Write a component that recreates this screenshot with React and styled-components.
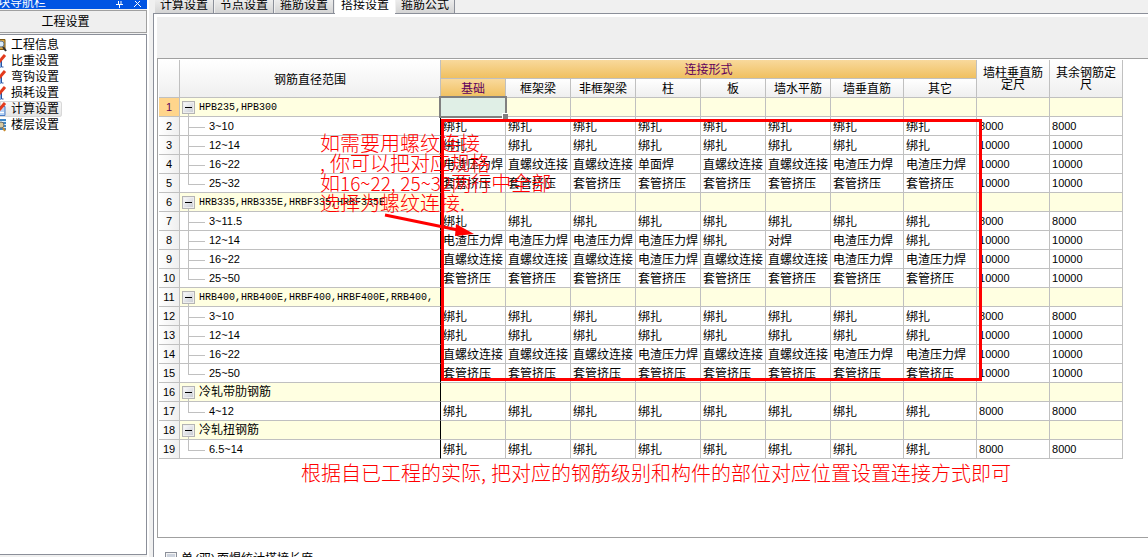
import React from "react";
import styled, { createGlobalStyle, css } from "styled-components";

const line = "#c0c0c0";
const edge = "#8b8f99";

const Global = createGlobalStyle`
  * { box-sizing: border-box; }
  body {
    margin: 0;
    background: #f0f0f0;
    color: #000;
    font: 12px/18px "Liberation Sans", "Noto Sans CJK SC", sans-serif;
  }
  button { font: inherit; color: inherit; padding: 0; margin: 0; }
`;

const Page = styled.div`
  display: flex;
  height: 100vh;
  overflow: hidden;
`;

/* ---- navigation pane ---- */
const Sidebar = styled.aside`
  flex: none;
  width: 149px;
  display: flex;
  flex-direction: column;
  padding-bottom: 2px;
  border-right: 2px solid #fff;
`;

const PaneTitle = styled.header`
  flex: none;
  height: 9px;
  overflow: hidden;
  display: flex;
  align-items: flex-end;
  background: #0054e3;
  color: #fff;
`;

const PaneName = styled.span`
  flex: 1;
  margin-left: -2px;
  margin-bottom: -3px;
`;

const PaneButton = styled.button`
  width: 18px;
  height: 8px;
  border: 0;
  background: none;
  display: flex;
  justify-content: center;
`;

const SectionButton = styled.button`
  flex: none;
  height: 23px;
  margin: 1px 0;
  padding-right: 15px;
  border: 1px solid #a0a0a0;
  border-width: 1px 1px 1px 0;
  background: #efefef;
`;

const NavList = styled.ul`
  flex: 1;
  margin: 0;
  padding: 2px 0 0;
  list-style: none;
  background: #fff;
  border: 1px solid ${edge};
  border-left: 0;
`;

const NavItem = styled.li`
  display: flex;
  height: 16px;
`;

const NavLink = styled.a`
  display: flex;
  align-items: center;
  gap: 3px;
  padding-right: 3px;
  line-height: 16px;
  color: #000;
  text-decoration: none;
  border-radius: 0 3px 3px 0;
  ${(p) => p.$active && css`
    background: linear-gradient(#fafafa, #e4e4e4);
    box-shadow: inset 0 0 0 1px #d8d8d8;
  `}
`;

/* ---- main area ---- */
const Main = styled.main`
  flex: 1;
  min-width: 0;
  margin-left: 4px;
  display: flex;
  flex-direction: column;
`;

const Tabs = styled.nav`
  flex: none;
  height: 14px;
  display: flex;
  align-items: flex-end;
  gap: 1px;
  padding-left: 2px;
  overflow: hidden;
  box-shadow: inset 0 -1px ${edge};
`;

const Tab = styled.button`
  flex: none;
  height: 18px;
  padding: 0 ${(p) => (p.$active ? "6px" : "5px")};
  line-height: ${(p) => (p.$active ? "16px" : "18px")};
  border: solid ${edge};
  border-width: ${(p) => (p.$active ? "0" : "0 1px 1px 0")};
  background: ${(p) => (p.$active ? "#fff" : "linear-gradient(#f4f4f4, #d4d4d4)")};
`;

const Sheet = styled.section`
  flex: 1;
  min-height: 0;
  display: flex;
  flex-direction: column;
  padding: 3px 0 0 3px;
  background: #fff;
  border-left: 1px solid ${edge};
`;

const Toolbar = styled.div`
  flex: none;
  height: 41px;
  background: #efefef;
`;

const GridBox = styled.div`
  flex: 1;
  min-height: 0;
  position: relative;
  padding: 1px;
  border: 1px solid #a0a0a0;
  border-right: 0;
`;

const Footer = styled.footer`
  flex: none;
  height: 19px;
  overflow: hidden;
  padding: 13px 0 0 8px;
`;

const Option = styled.label`
  display: flex;
  align-items: flex-start;
  gap: 4px;
  line-height: 16px;
`;

const Check = styled.input`
  appearance: none;
  width: 12px;
  height: 12px;
  margin: 1px 0 0;
  border: 1px solid ${edge};
  background: #ccd2dc;
  box-shadow: inset 0 0 0 1px #f4f4f4;
`;

/* half an ideograph wide, as in a fixed-pitch CJK face */
const Half = styled.span`
  display: inline-block;
  width: 0.5em;
  text-align: ${(p) => (p.$open ? "right" : "left")};
`;

/* ---- table ---- */
const Table = styled.table`
  width: 964px;
  table-layout: fixed;
  border-collapse: separate;
  border-spacing: 0;
`;

const Head = styled.th`
  height: 19px;
  padding: ${(p) => (p.$wrap ? "0 4px" : "2px 0 0")};
  font-weight: normal;
  line-height: ${(p) => (p.$wrap ? "12px" : "16px")};
  border: solid ${line};
  border-width: 0 1px 1px 0;
  color: ${(p) => (p.$hot ? "#60005c" : "#000")};
  background: ${(p) => (p.$hot ? "linear-gradient(#f9d99c, #f0c060)" : "linear-gradient(#fff, #efefef)")};
`;

const RowHead = styled(Head)`
  padding: 0;
  line-height: 18px;
  font-size: 11px;
  background: ${(p) => (p.$hot ? "#ffd58c" : "linear-gradient(90deg, #fff, #efefef)")};
`;

const Cell = styled.td`
  position: relative;
  height: 19px;
  padding: 2px 0 0 2px;
  line-height: 16px;
  white-space: nowrap;
  border: solid ${line};
  border-width: 0 1px 1px 0;
  background: ${(p) => (p.$group ? "#ffffe1" : "#fff")};
`;

const NumberCell = styled(Cell)`
  padding-top: 0;
  line-height: 18px;
  font-size: 11px;
`;

const TreeCell = styled(Cell)`
  padding-top: 0;
  border-right-color: #000;
`;

const TreeRow = styled.div`
  display: flex;
  height: 18px;
`;

const Expander = styled.span`
  display: flex;
  flex-direction: column;
  align-items: center;
  width: 13px;
  margin-right: 4px;
  padding-top: 3px;
  &::after {
    content: "";
    width: 1px;
    flex: 1;
    background: ${line};
  }
`;

const ExpandButton = styled.button`
  width: 13px;
  height: 13px;
  display: flex;
  align-items: center;
  justify-content: center;
  border: 1px solid #b4b4b4;
  background: linear-gradient(135deg, #fff, #c4c8d0);
  box-shadow: inset 0 0 0 1px #eee;
  &::after {
    content: "";
    width: 7px;
    height: 1px;
    background: #000;
  }
`;

const Branch = styled.span`
  width: 17px;
  height: 19px;
  margin: 0 4px 0 6px;
  &::before, &::after {
    content: "";
    display: block;
    border-left: 1px solid ${line};
  }
  &::before {
    height: 10px;
    border-bottom: 1px solid ${line};
  }
  &::after {
    height: 9px;
    border-left-width: ${(p) => (p.$last ? "0" : "1px")};
  }
`;

const Grade = styled.span`
  padding-top: 2px;
  font-family: "Liberation Mono", "Noto Sans CJK SC", monospace;
  font-size: ${(p) => (p.$cjk ? "12px" : "10px")};
`;

const Range = styled.span`
  padding-top: 1px;
  font-size: 11px;
`;

const Cursor = styled.span`
  position: absolute;
  z-index: 1;
  inset: -2px;
  border: 2px solid #808080;
  background: #e0efe6;
  &::after {
    content: "";
    position: absolute;
    right: -3px;
    bottom: -3px;
    width: 5px;
    height: 5px;
    background: #808080;
    border: solid #fff;
    border-width: 1px 0 0 1px;
  }
`;

/* ---- red markup over the grid ---- */
const Frame = styled.div`
  position: absolute;
  z-index: 2;
  left: 283px;
  top: 60px;
  width: 541px;
  height: 262px;
  border: 3px solid #f00;
`;

const Note = styled.p`
  position: absolute;
  z-index: 3;
  left: ${(p) => p.$x}px;
  top: ${(p) => p.$y}px;
  margin: 0;
  color: #f00;
  font-family: "Noto Sans CJK SC", sans-serif;
  font-size: 20px;
  font-weight: 300;
  line-height: 20px;
  white-space: nowrap;
`;

const Digits = styled.span`
  font-size: 19px;
  line-height: 0;
`;

const Arrow = styled.svg`
  position: absolute;
  z-index: 3;
  left: 222px;
  top: 150px;
`;

function NavIcon({ kind }) {
  return (
    <svg width="8" height="16" viewBox="0 0 8 16" aria-hidden="true">
      {kind === "info" && (
        <>
          <path d="M-2 2.500h7v10h-7z" fill="#d9a441" stroke="#7d5a14" />
          <circle cx="1" cy="7" r="3" fill="#dcecf8" stroke="#65798f" />
          <path d="M3 10l3 4" stroke="#303030" strokeWidth="2" />
        </>
      )}
      {kind === "check" && (
        <>
          <path d="M-2 6h3v9h-3z" fill="#7fa8e0" />
          <path d="M1.500 8v6h2" fill="none" stroke="#2855a4" />
          <path d="M-1 9L5 2" stroke="#e33a1c" strokeWidth="3" />
        </>
      )}
      {kind === "calc" && (
        <>
          <path d="M-2 5.500h7v9h-7z" fill="#b9d4f6" stroke="#4b7cc4" />
          <path d="M0 11.500h4" stroke="#fff" />
          <path d="M-1 9L5 2" stroke="#e33a1c" strokeWidth="3" />
        </>
      )}
      {kind === "floor" && (
        <>
          <path d="M-2 2h8v11h-8z" fill="#3f86c6" />
          <path d="M0 4.500h6M0 7.500h6M0 10.500h6" stroke="#d9efff" />
          <circle cx="1" cy="8" r="3" fill="#d8c9a0" stroke="#6b6b6b" />
          <path d="M3 11l2 3" stroke="#c98a2c" strokeWidth="2" />
        </>
      )}
    </svg>
  );
}

const nav = [
  ["工程信息", "info"],
  ["比重设置", "check"],
  ["弯钩设置", "check"],
  ["损耗设置", "check"],
  ["计算设置", "calc"],
  ["楼层设置", "floor"],
];

const tabs = ["计算设置", "节点设置", "箍筋设置", "搭接设置", "箍筋公式"];
const parts = ["基础", "框架梁", "非框架梁", "柱", "板", "墙水平筋", "墙垂直筋", "其它"];

const B = "绑扎";
const D = "电渣压力焊";
const Z = "直螺纹连接";
const T = "套管挤压";
const all = (v) => Array(8).fill(v);

const rows = [
  { group: "HPB235,HPB300" },
  { range: "3~10", v: all(B), len: 8000 },
  { range: "12~14", v: all(B), len: 10000 },
  { range: "16~22", v: [D, Z, Z, "单面焊", Z, Z, D, D], len: 10000 },
  { range: "25~32", v: all(T), len: 10000, last: true },
  { group: "HRB335,HRB335E,HRBF335,HRBF335E" },
  { range: "3~11.5", v: all(B), len: 8000 },
  { range: "12~14", v: [D, D, D, D, B, "对焊", D, B], len: 10000 },
  { range: "16~22", v: [Z, Z, Z, D, Z, Z, D, D], len: 10000 },
  { range: "25~50", v: all(T), len: 10000, last: true },
  { group: "HRB400,HRB400E,HRBF400,HRBF400E,RRB400," },
  { range: "3~10", v: all(B), len: 8000 },
  { range: "12~14", v: all(B), len: 10000 },
  { range: "16~22", v: [Z, Z, Z, D, Z, Z, D, D], len: 10000 },
  { range: "25~50", v: all(T), len: 10000, last: true },
  { group: "冷轧带肋钢筋", cjk: true },
  { range: "4~12", v: all(B), len: 8000, last: true },
  { group: "冷轧扭钢筋", cjk: true },
  { range: "6.5~14", v: all(B), len: 8000, last: true },
];

function GridRow({ row, index }) {
  const isGroup = Boolean(row.group);
  return (
    <tr>
      <RowHead scope="row" $hot={index === 0}>{index + 1}</RowHead>
      <TreeCell $group={isGroup}>
        <TreeRow>
          {isGroup ? (
            <>
              <Expander><ExpandButton type="button" aria-label={`折叠 ${row.group}`} /></Expander>
              <Grade $cjk={row.cjk}>{row.group}</Grade>
            </>
          ) : (
            <>
              <Branch $last={row.last} />
              <Range>{row.range}</Range>
            </>
          )}
        </TreeRow>
      </TreeCell>
      {parts.map((p, i) => (
        <Cell key={p} $group={isGroup}>
          {row.v && row.v[i]}
          {index === 0 && i === 0 && <Cursor />}
        </Cell>
      ))}
      <NumberCell $group={isGroup}>{row.len}</NumberCell>
      <NumberCell $group={isGroup}>{row.len}</NumberCell>
    </tr>
  );
}

export default function App() {
  return (
    <Page>
      <Global />
      <Sidebar>
        <PaneTitle>
          <PaneName>块导航栏</PaneName>
          <PaneButton type="button" aria-label="固定">
            <svg width="8" height="8" viewBox="0 0 8 8">
              <path d="M2.500 0v3.500M5 0v3.500M0 3.500h7M3.500 4v3" stroke="#fff" fill="none" />
            </svg>
          </PaneButton>
          <PaneButton type="button" aria-label="关闭">
            <svg width="8" height="8" viewBox="0 0 8 8">
              <path d="M0 -1l7 7M7 -1l-7 7" stroke="#fff" fill="none" />
            </svg>
          </PaneButton>
        </PaneTitle>
        <SectionButton type="button">工程设置</SectionButton>
        <NavList>
          {nav.map(([label, kind]) => (
            <NavItem key={label}>
              <NavLink href="#" $active={label === "计算设置"}>
                <NavIcon kind={kind} />
                {label}
              </NavLink>
            </NavItem>
          ))}
        </NavList>
      </Sidebar>
      <Main>
        <Tabs>
          {tabs.map((t) => (
            <Tab key={t} type="button" $active={t === "搭接设置"}>{t}</Tab>
          ))}
        </Tabs>
        <Sheet>
          <Toolbar />
          <GridBox>
            <Table>
              <colgroup>
                <col style={{ width: 21 }} />
                <col style={{ width: 261 }} />
                {parts.map((p, i) => <col key={p} style={{ width: i < 6 ? 65 : 73 }} />)}
                <col style={{ width: 73 }} />
                <col style={{ width: 73 }} />
              </colgroup>
              <thead>
                <tr>
                  <Head rowSpan={2} />
                  <Head rowSpan={2}>钢筋直径范围</Head>
                  <Head colSpan={8} $hot>连接形式</Head>
                  <Head rowSpan={2} $wrap>墙柱垂直筋定尺</Head>
                  <Head rowSpan={2} $wrap>其余钢筋定尺</Head>
                </tr>
                <tr>
                  {parts.map((p, i) => <Head key={p} $hot={i === 0}>{p}</Head>)}
                </tr>
              </thead>
              <tbody>
                {rows.map((r, i) => <GridRow key={i} row={r} index={i} />)}
              </tbody>
            </Table>
            <Frame />
            <Note $x={162} $y={74}>
              如需要用螺纹连接<br />
              <Half>,</Half>你可以把对应规格<br />
              如<Digits>16~22<Half>,</Half>25~32</Digits>两行中全部<br />
              选择为螺纹连接<Half>.</Half>
            </Note>
            <Arrow width="100" height="34" viewBox="0 0 100 34" aria-hidden="true">
              <path d="M5 6L78 21" stroke="#f00" strokeWidth="3" />
              <path d="M76 15L94 25L75 27Z" fill="#f00" />
            </Arrow>
            <Note $x={143} $y={404}>
              根据自已工程的实际<Half>,</Half>把对应的钢筋级别和构件的部位对应位置设置连接方式即可
            </Note>
          </GridBox>
          <Footer>
            <Option>
              <Check type="checkbox" />
              <span>单<Half $open>(</Half>双<Half>)</Half>面焊统计搭接长度</span>
            </Option>
          </Footer>
        </Sheet>
      </Main>
    </Page>
  );
}
